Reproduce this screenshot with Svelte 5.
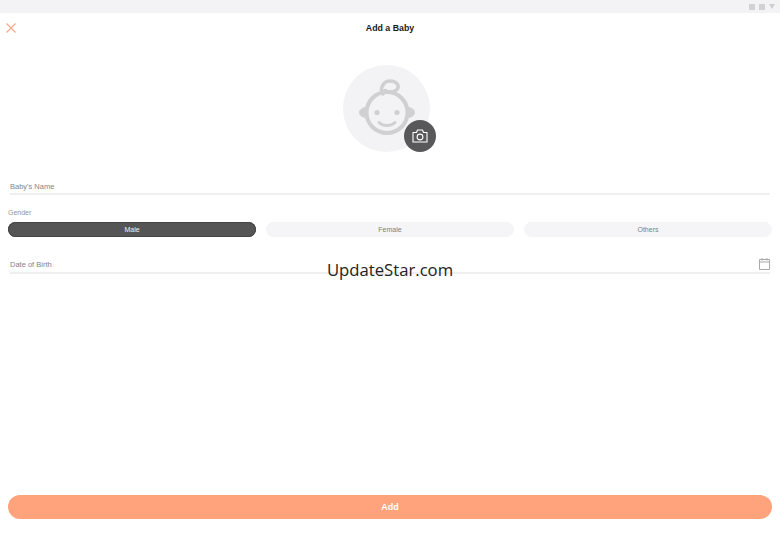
<script lang="ts">
  let name = "Baby's Name";
  let genders = [
    { label: "Male", active: true },
    { label: "Female", active: false },
    { label: "Others", active: false }
  ];
</script>

<div class="window">
  <div class="titlebar">
    <span class="ctl"></span>
    <span class="ctl"></span>
    <svg class="tri" width="6" height="5" viewBox="0 0 6 5"><path d="M0 0h6L3 5z" fill="#cfcfd1" /></svg>
  </div>

  <header class="head">
    <button class="close" aria-label="Close">
      <svg width="10" height="10" viewBox="0 0 10 10" fill="none" stroke="#f5a886" stroke-width="1.100">
        <path d="M.5.5l9 9M9.500.5l-9 9" />
      </svg>
    </button>
    <h1>Add a Baby</h1>
  </header>

  <div class="avatar-row">
    <div class="avatar">
      <svg class="face" width="60" height="62" viewBox="0 0 60 62" fill="none" stroke="#d0d0d2" stroke-width="4">
        <circle cx="30" cy="34.500" r="20.500" />
        <path d="M8 29.500c-4 1-5.500 3-5.500 5s1.500 4 5.500 5zM52 29.500c4 1 5.500 3 5.500 5s-1.500 4-5.500 5z" stroke-width="1" fill="#d0d0d2" />
        <path d="M26 16c-4-6 1-13 7-13 7 0 10 5 7 8.500-3 3-8 3-12 1" stroke-width="3.500" stroke-linecap="round" />
        <circle cx="20" cy="34.500" r="2.600" fill="#d0d0d2" stroke="none" />
        <circle cx="40" cy="34.500" r="2.600" fill="#d0d0d2" stroke="none" />
        <path d="M22 44.500c4 4 12 4 16 0" stroke-width="3" stroke-linecap="round" />
      </svg>
      <div class="camera">
        <svg width="16" height="14" viewBox="0 0 16 14" fill="none" stroke="#fff" stroke-width="1.100">
          <path d="M1 3.500h3.500L5.500 1h5l1 2.500H15v9.500H1z" stroke-linejoin="round" />
          <circle cx="8" cy="8" r="2.900" />
        </svg>
      </div>
    </div>
  </div>

  <div class="field name-field">
    <span>{name}</span>
  </div>

  <div class="gender">
    <div class="gender-label">Gender</div>
    <div class="pills">
      {#each genders as g}
        <div class="pill" class:active={g.active}>{g.label}</div>
      {/each}
    </div>
  </div>

  <div class="field dob-field">
    <span>Date of Birth</span>
    <svg class="cal" width="11" height="12" viewBox="0 0 11 12" fill="none" stroke="#a9a9ab" stroke-width="1">
      <path d="M.5 1.500h10v10H.5zM.5 4h10M3 0v2.500M8 0v2.500" />
    </svg>
  </div>

  <div class="spacer"></div>

  <div class="foot">
    <button class="add">Add</button>
  </div>

  <div class="watermark">UpdateStar.com</div>
</div>

<style>
  :global(body) {
    margin: 0;
    background: #fff;
  }

  .window {
    position: relative;
    width: 780px;
    height: 536px;
    display: flex;
    flex-direction: column;
    overflow: hidden;
    font-family: "Liberation Sans", Arial, sans-serif;
    background: #fff;
  }

  .titlebar {
    height: 13px;
    background: #f3f3f5;
    display: flex;
    justify-content: flex-end;
    align-items: center;
    gap: 4px;
    padding-right: 5px;
    box-sizing: border-box;
  }

  .ctl {
    width: 6px;
    height: 6px;
    background: #d2d2d4;
  }

  .head {
    height: 30px;
    display: flex;
    align-items: center;
    justify-content: center;
    position: relative;
  }

  .head h1 {
    margin: 0;
    font-size: 8.800px;
    font-weight: 700;
    color: #1a1a1a;
  }

  .close {
    position: absolute;
    left: 6px;
    top: 10px;
    padding: 0;
    border: 0;
    background: none;
    display: flex;
  }

  .avatar-row {
    display: flex;
    justify-content: center;
    padding-top: 22px;
    padding-right: 7px;
  }

  .avatar {
    position: relative;
    width: 87px;
    height: 87px;
    border-radius: 50%;
    background: #f3f3f5;
    display: flex;
    align-items: center;
    justify-content: center;
  }

  .camera {
    position: absolute;
    right: -6px;
    bottom: 0;
    width: 32px;
    height: 32px;
    border-radius: 50%;
    background: #58585a;
    display: flex;
    align-items: center;
    justify-content: center;
  }

  .field {
    margin: 0 10px;
    border-bottom: 2px solid #efeff1;
    display: flex;
    align-items: center;
    justify-content: space-between;
    font-size: 7.500px;
    color: #848487;
    box-sizing: border-box;
  }

  .name-field {
    margin-top: 27px;
    height: 16px;
  }

  .gender {
    padding: 13px 8px 0;
  }

  .gender-label {
    font-size: 7px;
    line-height: 9px;
    color: #949497;
    margin-bottom: 5px;
  }

  .pills {
    display: grid;
    grid-template-columns: repeat(3, 1fr);
    gap: 10px;
  }

  .pill {
    height: 15px;
    border-radius: 8px;
    background: #f5f5f7;
    font-size: 7px;
    line-height: 15px;
    text-align: center;
    color: #808083;
    box-sizing: border-box;
  }

  .pill.active {
    background: #555556;
    color: #f2f2f2;
    box-shadow: inset 0 0 0 1px #444445;
  }

  .dob-field {
    margin-top: 20px;
    height: 17px;
  }

  .cal {
    margin-bottom: 2px;
  }

  .spacer {
    flex: 1;
  }

  .foot {
    padding: 0 8px 17px;
  }

  .add {
    display: block;
    width: 100%;
    height: 24px;
    border: 0;
    border-radius: 12px;
    background: #fea37c;
    color: #fff;
    font-family: inherit;
    font-size: 9px;
    font-weight: 700;
    padding: 0;
  }

  .watermark {
    position: absolute;
    left: 0;
    right: 0;
    top: 257px;
    text-align: center;
    font-family: "Open Sans", sans-serif;
    font-size: 16.700px;
    line-height: 25px;
    color: #222;
    pointer-events: none;
  }
</style>
